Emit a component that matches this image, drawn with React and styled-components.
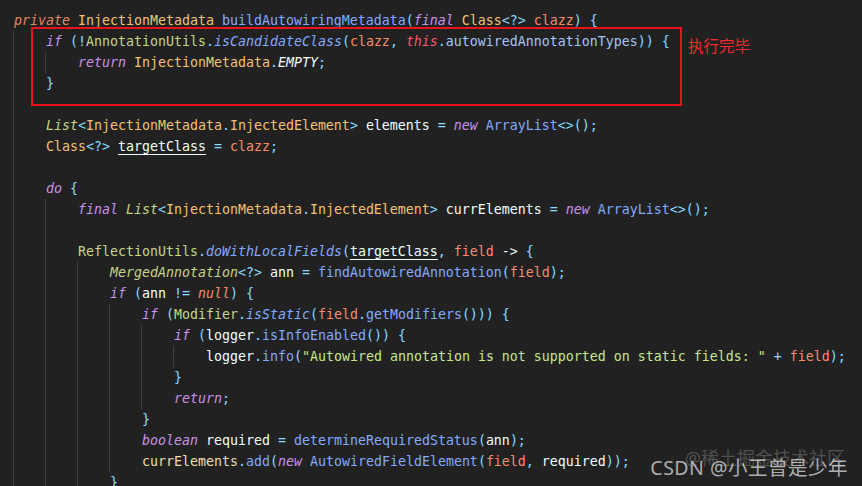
import React from 'react';
import styled, { createGlobalStyle, css } from 'styled-components';

const GlobalStyle = createGlobalStyle`
  html, body {
    margin: 0;
    padding: 0;
    background: #212121;
    overflow: hidden;
  }
`;

// colours of the editor theme
const palette = {
  k: '#c792ea',
  m: '#e0875f',
  t: '#f2c274',
  g: '#c3d688',
  gi: '#c3d688',
  f: '#82aaff',
  fi: '#82aaff',
  p: '#f78c6c',
  th: '#ff5370',
  pr: '#a3c6f2',
  c: '#eeffff',
  o: '#89ddff',
  v: '#eeffff',
  u: '#eeffff',
  s: '#c3e88d',
  n: '#f78c6c',
  y: '#ecdfae',
};

const italicKinds = ['k', 'm', 'gi', 'fi', 'th', 'c', 'n'];

const Editor = styled.div`
  position: relative;
  width: 862px;
  height: 486px;
  box-sizing: border-box;
  padding: 10px 0 0 13px;
  overflow: hidden;
  font-family: "DejaVu Sans Mono", "Liberation Mono", monospace;
  font-size: 13.29px;
  line-height: 21px;
  color: #eeffff;
  white-space: pre;
`;

const Line = styled.div`
  height: 21px;
`;

// indent guides, one thin line per 4-space level
const Indent = styled.span`
  display: inline-block;
  vertical-align: top;
  height: 21px;
  width: ${(p) => p.$level * 32 + 1}px;
  ${(p) => p.$level > 0 && css`
    background-image: repeating-linear-gradient(to right, #3d3d3d 0 1px, transparent 1px 32px);
    background-repeat: no-repeat;
    background-size: ${p.$level * 32}px 21px;
  `}
`;

const Token = styled.span`
  color: ${(p) => palette[p.$kind] || '#eeffff'};
  ${(p) => italicKinds.includes(p.$kind) && css`font-style: italic;`}
  ${(p) => p.$kind === 'u' && css`
    text-decoration: underline;
    text-underline-offset: 3px;
  `}
`;

// red annotation laid over the first if-block
const Annotation = styled.div`
  position: absolute;
  left: 31px;
  top: 27px;
  display: flex;
  align-items: flex-start;
  gap: 6px;
`;

const Highlight = styled.div`
  width: 651px;
  height: 79px;
  box-sizing: border-box;
  border: 2px solid #e8141c;
`;

const Note = styled.div`
  margin-top: 11px;
  font-family: "Noto Sans CJK SC", sans-serif;
  font-size: 15.5px;
  line-height: 1;
  color: #ee2a2a;
  white-space: nowrap;
`;

const Watermarks = styled.div`
  position: absolute;
  right: 17px;
  bottom: 9px;
  display: flex;
  flex-direction: column;
  align-items: flex-end;
  font-family: "Noto Sans", "Noto Sans CJK SC", sans-serif;
  line-height: 1;
  white-space: nowrap;
`;

const Mark = styled.div`
  font-size: ${(p) => (p.$main ? 19.5 : 18)}px;
  color: ${(p) => (p.$main ? 'rgba(230,230,230,0.72)' : 'rgba(255,255,255,0.22)')};
  letter-spacing: ${(p) => (p.$main ? 0.5 : 0)}px;
  margin-top: ${(p) => (p.$main ? -9 : 0)}px;
  margin-right: ${(p) => (p.$main ? -3 : 0)}px;
`;

const S = ' ';

const lines = [
  [0, [['m', 'private'], S, ['t', 'InjectionMetadata'], S, ['f', 'buildAutowiringMetadata'], ['o', '('], ['k', 'final'], S, ['t', 'Class'], ['o', '<?>'], S, ['p', 'clazz'], ['o', ')'], S, ['o', '{']]],
  [1, [['k', 'if'], S, ['o', '(!'], ['g', 'AnnotationUtils'], ['o', '.'], ['fi', 'isCandidateClass'], ['o', '('], ['p', 'clazz'], ['o', ','], S, ['th', 'this'], ['o', '.'], ['pr', 'autowiredAnnotationTypes'], ['o', '))'], S, ['o', '{']]],
  [2, [['k', 'return'], S, ['t', 'InjectionMetadata'], ['o', '.'], ['c', 'EMPTY'], ['o', ';']]],
  [1, [['o', '}']]],
  [1, []],
  [1, [['gi', 'List'], ['o', '<'], ['t', 'InjectionMetadata'], ['o', '.'], ['t', 'InjectedElement'], ['o', '>'], S, ['v', 'elements'], S, ['o', '='], S, ['k', 'new'], S, ['f', 'ArrayList'], ['o', '<>();']]],
  [1, [['t', 'Class'], ['o', '<?>'], S, ['u', 'targetClass'], S, ['o', '='], S, ['p', 'clazz'], ['o', ';']]],
  [1, []],
  [1, [['k', 'do'], S, ['o', '{']]],
  [2, [['k', 'final'], S, ['gi', 'List'], ['o', '<'], ['t', 'InjectionMetadata'], ['o', '.'], ['t', 'InjectedElement'], ['o', '>'], S, ['v', 'currElements'], S, ['o', '='], S, ['k', 'new'], S, ['f', 'ArrayList'], ['o', '<>();']]],
  [2, []],
  [2, [['g', 'ReflectionUtils'], ['o', '.'], ['fi', 'doWithLocalFields'], ['o', '('], ['u', 'targetClass'], ['o', ','], S, ['p', 'field'], S, ['v', '->'], S, ['o', '{']]],
  [3, [['gi', 'MergedAnnotation'], ['o', '<?>'], S, ['v', 'ann'], S, ['o', '='], S, ['f', 'findAutowiredAnnotation'], ['o', '('], ['p', 'field'], ['o', ');']]],
  [3, [['k', 'if'], S, ['o', '('], ['v', 'ann'], S, ['o', '!='], S, ['n', 'null'], ['o', ')'], S, ['o', '{']]],
  [4, [['k', 'if'], S, ['o', '('], ['g', 'Modifier'], ['o', '.'], ['fi', 'isStatic'], ['o', '('], ['p', 'field'], ['o', '.'], ['f', 'getModifiers'], ['o', '()))'], S, ['o', '{']]],
  [5, [['k', 'if'], S, ['o', '('], ['v', 'logger'], ['o', '.'], ['f', 'isInfoEnabled'], ['o', '())'], S, ['o', '{']]],
  [6, [['v', 'logger'], ['o', '.'], ['f', 'info'], ['o', '('], ['s', '"Autowired annotation is not supported on static fields: "'], S, ['o', '+'], S, ['p', 'field'], ['o', ');']]],
  [5, [['o', '}']]],
  [5, [['k', 'return'], ['o', ';']]],
  [4, [['o', '}']]],
  [4, [['k', 'boolean'], S, ['v', 'required'], S, ['o', '='], S, ['f', 'determineRequiredStatus'], ['o', '('], ['v', 'ann'], ['o', ');']]],
  [4, [['y', 'currElements'], ['o', '.'], ['f', 'add'], ['o', '('], ['k', 'new'], S, ['f', 'AutowiredFieldElement'], ['o', '('], ['p', 'field'], ['o', ','], S, ['v', 'required'], ['o', '));']]],
  [3, [['o', '}']]],
];

const App = () => (
  <>
    <GlobalStyle />
    <Editor>
      {lines.map(([level, tokens], i) => (
        <Line key={i}>
          <Indent $level={level} />
          {tokens.map((tok, j) =>
            typeof tok === 'string' ? (
              <Token key={j}>{tok}</Token>
            ) : (
              <Token key={j} $kind={tok[0]}>{tok[1]}</Token>
            )
          )}
        </Line>
      ))}
      <Annotation>
        <Highlight />
        <Note>执行完毕</Note>
      </Annotation>
      <Watermarks>
        <Mark>@稀土掘金技术社区</Mark>
        <Mark $main>CSDN @小王曾是少年</Mark>
      </Watermarks>
    </Editor>
  </>
);

export default App;
